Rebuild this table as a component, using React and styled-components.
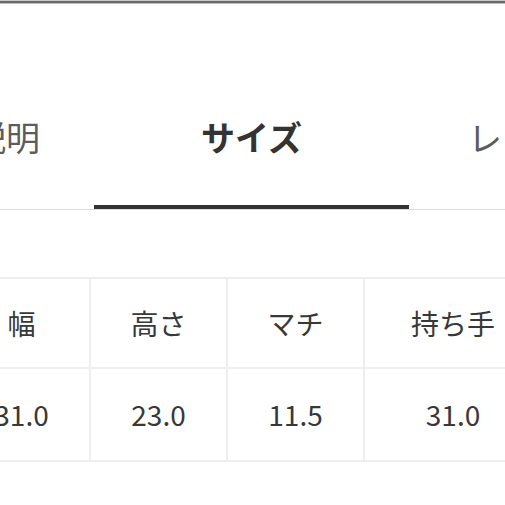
import styled, { createGlobalStyle } from "styled-components";

const GlobalStyle = createGlobalStyle`
  html, body {
    margin: 0;
    padding: 0;
    background: #ffffff;
    overflow: hidden;
  }

  body {
    font-family: "Noto Sans CJK JP", "Noto Sans", sans-serif;
    color: #333333;
  }
`;

const Page = styled.div`
  width: 505px;
  height: 505px;
  overflow: hidden;
`;

const TopRule = styled.div`
  height: 4px;
  background: linear-gradient(#c8c8c8 0, #c8c8c8 1px, #6a6a6a 1px, #6a6a6a 3px, #bdbdbd 3px);
`;

const TabBar = styled.div`
  display: grid;
  grid-template-columns: 176px 315px 254px;
  margin-left: -82px;
  width: 670px;
  border-bottom: 1px solid #dcdcdc;
`;

const Tab = styled.div`
  padding-top: 116px;
  height: 85px;
  font-size: 34px;
  line-height: 34px;
  text-align: center;
  white-space: nowrap;
  font-weight: ${(p) => (p.$active ? 700 : 400)};
  color: ${(p) => (p.$active ? "#333333" : "#5c5c5c")};
  border-bottom: 4px solid ${(p) => (p.$active ? "#333333" : "transparent")};
`;

const SizeTable = styled.div`
  display: grid;
  grid-template-columns: 135px 135px 135px 176px;
  grid-template-rows: 88px 91px;
  gap: 2px;
  padding: 2px;
  background: #eeeeee;
  margin-top: 67px;
  margin-left: -48px;
  width: max-content;
`;

const Cell = styled.div`
  display: flex;
  align-items: center;
  justify-content: center;
  background: #ffffff;
  font-size: 28px;
  line-height: 1;
  color: #383838;
  white-space: nowrap;
  padding-bottom: ${(p) => (p.$head ? "0" : "2px")};
`;

const tabs = [
  { label: "説明" },
  { label: "サイズ", active: true },
  { label: "レビュー" },
];

const sizes = [
  { name: "幅", value: "31.0" },
  { name: "高さ", value: "23.0" },
  { name: "マチ", value: "11.5" },
  { name: "持ち手", value: "31.0" },
];

function App() {
  return (
    <Page>
      <GlobalStyle />
      <TopRule />
      <TabBar>
        {tabs.map((t) => (
          <Tab key={t.label} $active={t.active}>
            {t.label}
          </Tab>
        ))}
      </TabBar>
      <SizeTable>
        {sizes.map((s) => (
          <Cell key={s.name} $head>
            {s.name}
          </Cell>
        ))}
        {sizes.map((s) => (
          <Cell key={s.name + "-v"}>{s.value}</Cell>
        ))}
      </SizeTable>
    </Page>
  );
}

export default App;
